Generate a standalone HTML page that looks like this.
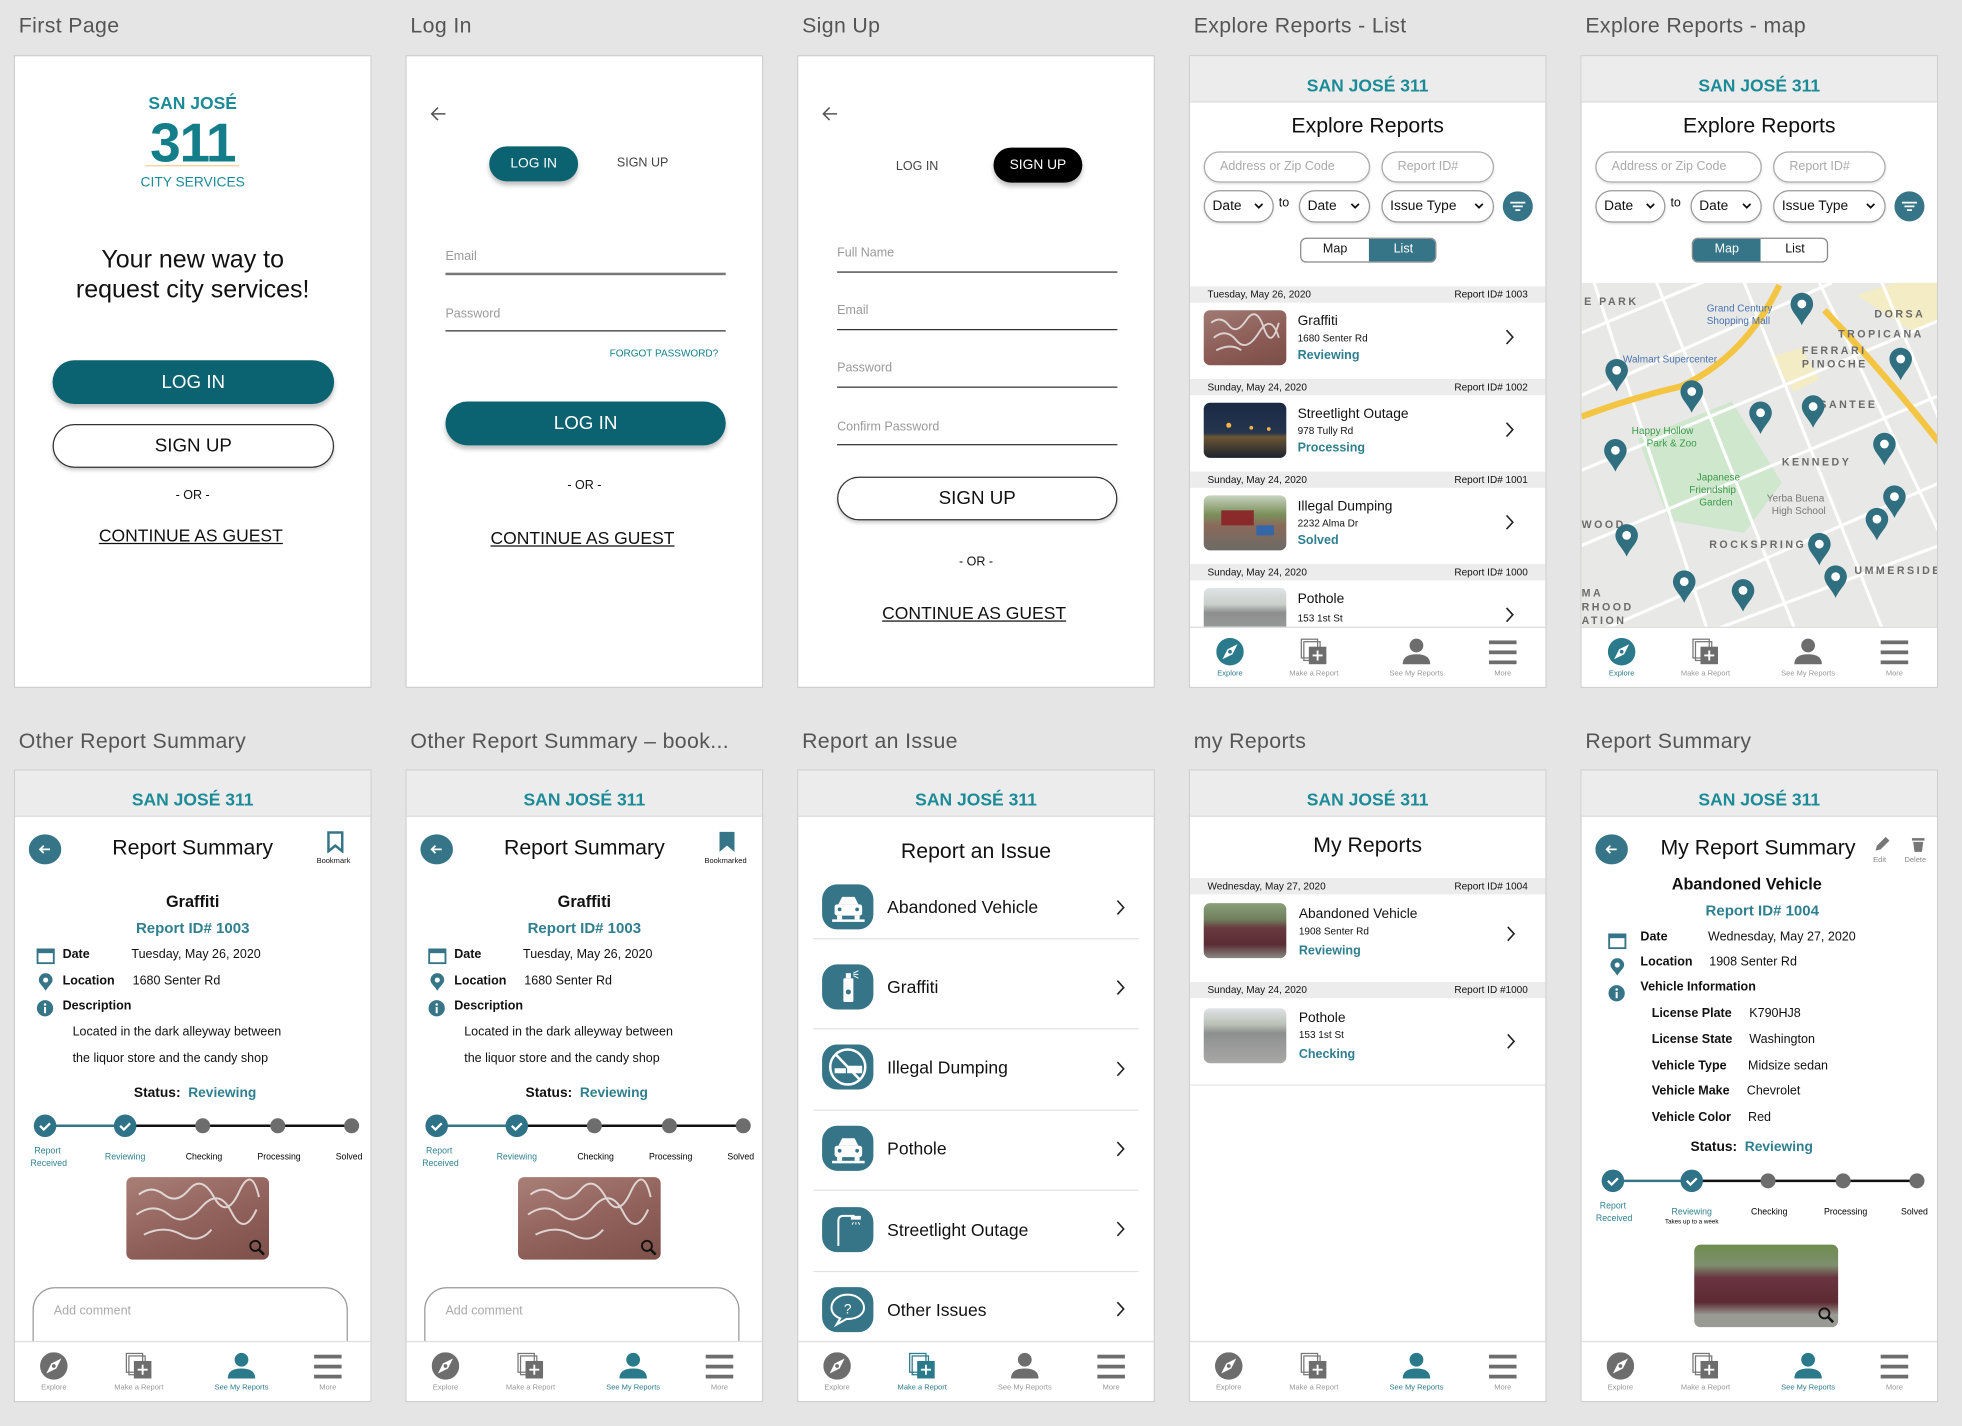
<!DOCTYPE html>
<html><head><meta charset="utf-8">
<style>
*{margin:0;padding:0;box-sizing:border-box}
html,body{width:1962px;height:1426px;overflow:hidden;background:#e5e5e5}
#w{position:absolute;left:0;top:0;width:1568px;height:1140px;transform:scale(1.25128,1.25088);transform-origin:0 0;font-family:"Liberation Sans",Arial,sans-serif;color:#111}
.lbl{position:absolute;font-size:17px;color:#555;white-space:nowrap;letter-spacing:.3px}
.p{position:absolute;width:286px;height:506px;background:#fff;border:1px solid #cfcfcf;overflow:hidden}
.a{position:absolute;white-space:nowrap;line-height:1}
.c{left:0;right:0;text-align:center}
.hd{position:absolute;left:0;top:0;width:100%;height:37px;background:#ececec;border-bottom:1px solid #dcdcdc}
.hd span{position:absolute;left:0;right:0;top:16px;text-align:center;font-weight:bold;font-size:14px;color:#1b8b97;line-height:1}
.btn{position:absolute;border-radius:18px;text-align:center;font-size:15px}
.fill{background:#0b6270;color:#fff;box-shadow:0 3px 4px rgba(0,0,0,.25)}
.out{background:#fff;border:1px solid #333;box-shadow:0 2px 3px rgba(0,0,0,.2)}
.ph{position:absolute;font-size:10px;color:#9a9a9a;line-height:1}
.ln{position:absolute;height:1px;background:#333}
.pill{position:absolute;height:25px;border:1px solid #aaa;border-radius:13px;font-size:10px;color:#aaa;line-height:23px;padding-left:12px;box-shadow:0 1px 2px rgba(0,0,0,.15)}
.dd{position:absolute;height:26px;border:1px solid #999;border-radius:13px;font-size:11px;color:#111;line-height:24px;padding-left:6px;box-shadow:0 1px 2px rgba(0,0,0,.15)}
.dd svg{position:absolute;right:7px;top:9px}
.band{position:absolute;left:0;width:100%;height:13px;background:#ececec;font-size:8px;line-height:13px}
.band b{font-weight:normal;position:absolute;left:14px}
.band i{font-style:normal;position:absolute;right:14px}
.img{position:absolute;border-radius:5px;overflow:hidden}
.nav{position:absolute;left:0;top:456px;width:100%;height:50px;background:#fff;border-top:1px solid #ddd}
.ni{position:absolute;top:8px;width:60px;text-align:center;font-size:6px;color:#999}
.ni svg{display:block;margin:0 auto 4px}
.act{color:#2a7a8c}
.rt{position:absolute;left:71px;font-size:14px;line-height:1}
.ic{position:absolute;left:19px;width:41px;height:36px;border-radius:12px;background:#367588}
.dv{position:absolute;left:12px;right:12px;height:1px;background:#e2e2e2}
.b10{font-size:10px}
</style></head><body><div id="w">

<!-- labels -->
<div class="lbl" style="left:15px;top:11px">First Page</div>
<div class="lbl" style="left:328px;top:11px">Log In</div>
<div class="lbl" style="left:641px;top:11px">Sign Up</div>
<div class="lbl" style="left:954px;top:11px">Explore Reports - List</div>
<div class="lbl" style="left:1267px;top:11px">Explore Reports - map</div>
<div class="lbl" style="left:15px;top:583px">Other Report Summary</div>
<div class="lbl" style="left:328px;top:583px">Other Report Summary – book...</div>
<div class="lbl" style="left:641px;top:583px">Report an Issue</div>
<div class="lbl" style="left:954px;top:583px">my Reports</div>
<div class="lbl" style="left:1267px;top:583px">Report Summary</div>

<!-- P1 First page -->
<div class="p" style="left:11px;top:44px">
 <div class="a c" style="top:30px;font-size:14px;font-weight:bold;color:#1b8b97">SAN JOSÉ</div>
 <div class="a c" style="top:48px;font-size:44px;font-weight:bold;color:#137e8a;letter-spacing:-1px">311</div>
 <div class="a" style="left:104px;top:87px;width:75px;height:1px;background:#f5cf8f"></div>
 <div class="a c" style="top:96px;font-size:11px;color:#1b8b97">CITY SERVICES</div>
 <div class="a c" style="top:153px;font-size:20px">Your new way to</div>
 <div class="a c" style="top:177px;font-size:20px">request city services!</div>
 <div class="btn fill" style="left:30px;top:243px;width:225px;height:35px;line-height:35px">LOG IN</div>
 <div class="btn out" style="left:30px;top:294px;width:225px;height:35px;line-height:33px">SIGN UP</div>
 <div class="a c" style="top:347px;font-size:10px">- OR -</div>
 <div class="a" style="left:67px;top:376px;font-size:14px;text-decoration:underline">CONTINUE AS GUEST</div>
</div>

<!-- P2 Log in -->
<div class="p" style="left:324px;top:44px">
 <svg class="a" style="left:18px;top:40px" width="14" height="12"><path d="M13 6H2M7 1L2 6l5 5" stroke="#555" fill="none" stroke-width="1.2"/></svg>
 <div class="btn fill" style="left:66px;top:72px;width:71px;height:28px;line-height:28px;font-size:11px;border-radius:14px">LOG IN</div>
 <div class="a" style="left:168px;top:81px;font-size:10px;color:#444">SIGN UP</div>
 <div class="ph" style="left:31px;top:156px">Email</div>
 <div class="ln" style="left:31px;top:173px;width:224px;height:2px;background:#777"></div>
 <div class="ph" style="left:31px;top:202px">Password</div>
 <div class="ln" style="left:31px;top:219px;width:224px"></div>
 <div class="a" style="right:35px;top:234px;font-size:8px;color:#137e8a">FORGOT PASSWORD?</div>
 <div class="btn fill" style="left:31px;top:276px;width:224px;height:35px;line-height:35px">LOG IN</div>
 <div class="a c" style="top:339px;font-size:10px">- OR -</div>
 <div class="a" style="left:67px;top:378px;font-size:14px;text-decoration:underline">CONTINUE AS GUEST</div>
</div>

<!-- P3 Sign up -->
<div class="p" style="left:637px;top:44px">
 <svg class="a" style="left:18px;top:40px" width="14" height="12"><path d="M13 6H2M7 1L2 6l5 5" stroke="#555" fill="none" stroke-width="1.2"/></svg>
 <div class="a" style="left:78px;top:84px;font-size:10px;color:#444">LOG IN</div>
 <div class="btn" style="left:156px;top:73px;width:71px;height:28px;line-height:28px;font-size:11px;border-radius:14px;background:#000;color:#fff;box-shadow:0 3px 4px rgba(0,0,0,.25)">SIGN UP</div>
 <div class="ph" style="left:31px;top:153px">Full Name</div><div class="ln" style="left:31px;top:172px;width:224px"></div>
 <div class="ph" style="left:31px;top:199px">Email</div><div class="ln" style="left:31px;top:218px;width:224px"></div>
 <div class="ph" style="left:31px;top:245px">Password</div><div class="ln" style="left:31px;top:264px;width:224px"></div>
 <div class="ph" style="left:31px;top:292px">Confirm Password</div><div class="ln" style="left:31px;top:310px;width:224px"></div>
 <div class="btn out" style="left:31px;top:336px;width:224px;height:35px;line-height:33px">SIGN UP</div>
 <div class="a c" style="top:400px;font-size:10px">- OR -</div>
 <div class="a" style="left:67px;top:438px;font-size:14px;text-decoration:underline">CONTINUE AS GUEST</div>
</div>

<!-- P4 Explore list -->
<div class="p" style="left:950px;top:44px">
 <div class="hd"><span>SAN JOSÉ 311</span></div>
 <div class="a c" style="top:47px;font-size:17px">Explore Reports</div>
 <div class="pill" style="left:11px;top:76px;width:133px">Address or Zip Code</div>
 <div class="pill" style="left:153px;top:76px;width:90px">Report ID#</div>
 <div class="dd" style="left:11px;top:107px;width:56px">Date<svg width="8" height="6"><path d="M1 1l3 3 3-3" stroke="#111" fill="none" stroke-width="1.4"/></svg></div>
 <div class="a" style="left:71px;top:113px;font-size:10px">to</div>
 <div class="dd" style="left:87px;top:107px;width:57px">Date<svg width="8" height="6"><path d="M1 1l3 3 3-3" stroke="#111" fill="none" stroke-width="1.4"/></svg></div>
 <div class="dd" style="left:153px;top:107px;width:90px">Issue Type<svg width="8" height="6"><path d="M1 1l3 3 3-3" stroke="#111" fill="none" stroke-width="1.4"/></svg></div>
 <svg class="a" style="left:249px;top:107px" width="26" height="26"><circle cx="13" cy="13" r="12" fill="#367588"/><path d="M7 10h12M9 13h8M11 16h4" stroke="#fff" stroke-width="1.4"/></svg>
 <div class="a" style="left:88px;top:145px;width:109px;height:20px;border:1px solid #888;border-radius:5px;overflow:hidden;font-size:10px;line-height:18px">
  <div style="position:absolute;left:0;width:54px;text-align:center">Map</div>
  <div style="position:absolute;left:54px;width:55px;height:20px;text-align:center;background:#367588;color:#fff">List</div></div>
 <div class="band" style="top:184px"><b>Tuesday, May 26, 2020</b><i>Report ID# 1003</i></div>
 <div class="img" style="left:11px;top:203px;width:66px;height:44px;background:linear-gradient(160deg,#a07a74,#8b5a54 60%,#7a4e48)"><svg width="66" height="44"><path d="M6 10q8-6 14 2t14-4 14 6 12-4M8 22q10-8 18 2t18-6 16 4M10 32q12-6 20 0" stroke="#eee" fill="none" stroke-width="1.5" opacity=".8"/></svg></div>
 <div class="a" style="left:86px;top:207px;font-size:11px">Graffiti</div>
 <div class="a" style="left:86px;top:222px;font-size:8px">1680 Senter Rd</div>
 <div class="a" style="left:86px;top:235px;font-size:10px;font-weight:bold;color:#2f7f8f">Reviewing</div>
 <svg class="a" style="left:252px;top:218px" width="8" height="13"><path d="M1 1l5 5.5L1 12" stroke="#222" fill="none" stroke-width="1.3"/></svg>
 <div class="band" style="top:258px"><b>Sunday, May 24, 2020</b><i>Report ID# 1002</i></div>
 <div class="img" style="left:11px;top:277px;width:66px;height:44px;background:linear-gradient(180deg,#1a2a44,#26354e 55%,#6b5533 62%,#1c2430)"><svg width="66" height="44"><circle cx="20" cy="18" r="2" fill="#f5b34a"/><circle cx="38" cy="20" r="1.5" fill="#f5b34a"/><circle cx="52" cy="21" r="1.5" fill="#f5b34a"/></svg></div>
 <div class="a" style="left:86px;top:281px;font-size:11px">Streetlight Outage</div>
 <div class="a" style="left:86px;top:296px;font-size:8px">978 Tully Rd</div>
 <div class="a" style="left:86px;top:309px;font-size:10px;font-weight:bold;color:#2f7f8f">Processing</div>
 <svg class="a" style="left:252px;top:292px" width="8" height="13"><path d="M1 1l5 5.5L1 12" stroke="#222" fill="none" stroke-width="1.3"/></svg>
 <div class="band" style="top:332px"><b>Sunday, May 24, 2020</b><i>Report ID# 1001</i></div>
 <div class="img" style="left:11px;top:351px;width:66px;height:44px;background:linear-gradient(180deg,#c8d4c0,#7a8f5a 35%,#8a6a5a 55%,#6c6a66)"><svg width="66" height="44"><rect x="14" y="12" width="26" height="12" fill="#8a2a2a"/><rect x="42" y="24" width="14" height="8" fill="#3466a8"/></svg></div>
 <div class="a" style="left:86px;top:355px;font-size:11px">Illegal Dumping</div>
 <div class="a" style="left:86px;top:370px;font-size:8px">2232 Alma Dr</div>
 <div class="a" style="left:86px;top:383px;font-size:10px;font-weight:bold;color:#2f7f8f">Solved</div>
 <svg class="a" style="left:252px;top:366px" width="8" height="13"><path d="M1 1l5 5.5L1 12" stroke="#222" fill="none" stroke-width="1.3"/></svg>
 <div class="band" style="top:406px"><b>Sunday, May 24, 2020</b><i>Report ID# 1000</i></div>
 <div class="img" style="left:11px;top:425px;width:66px;height:44px;background:linear-gradient(180deg,#dfe3e6,#c9cfc9 30%,#8d8f8f 45%,#a3a3a3)"></div>
 <div class="a" style="left:86px;top:429px;font-size:11px">Pothole</div>
 <div class="a" style="left:86px;top:446px;font-size:8px">153 1st St</div>
 <svg class="a" style="left:252px;top:440px" width="8" height="13"><path d="M1 1l5 5.5L1 12" stroke="#222" fill="none" stroke-width="1.3"/></svg>
 <div class="nav">
  <div class="ni act" style="left:2px"><svg width="22" height="22"><circle cx="11" cy="11" r="11" fill="#2a7a8c"/><path d="M17 5l-4 8-8 4 4-8z" fill="#fff"/><circle cx="11" cy="11" r="1.5" fill="#2a7a8c"/></svg>Explore</div>
  <div class="ni" style="left:69px"><svg width="22" height="22"><rect x="1" y="1" width="13" height="15" fill="none" stroke="#777"/><rect x="3" y="3" width="13" height="15" fill="none" stroke="#777"/><rect x="7" y="7" width="14" height="14" fill="#6d6d6d"/><path d="M14 10v8M10 14h8" stroke="#fff" stroke-width="1.5"/></svg>Make a Report</div>
  <div class="ni" style="left:151px"><svg width="24" height="22"><circle cx="12" cy="6" r="5.5" fill="#6d6d6d"/><path d="M1 21q0-8 11-8t11 8z" fill="#6d6d6d"/></svg>See My Reports</div>
  <div class="ni" style="left:220px"><svg width="24" height="22"><rect x="1" y="2" width="22" height="3" fill="#6d6d6d"/><rect x="1" y="10" width="22" height="3" fill="#6d6d6d"/><rect x="1" y="18" width="22" height="3" fill="#6d6d6d"/></svg>More</div>
 </div>
</div>

<!-- P5 Explore map -->
<div class="p" style="left:1263px;top:44px">
 <div class="hd"><span>SAN JOSÉ 311</span></div>
 <div class="a c" style="top:47px;font-size:17px">Explore Reports</div>
 <div class="pill" style="left:11px;top:76px;width:133px">Address or Zip Code</div>
 <div class="pill" style="left:153px;top:76px;width:90px">Report ID#</div>
 <div class="dd" style="left:11px;top:107px;width:56px">Date<svg width="8" height="6"><path d="M1 1l3 3 3-3" stroke="#111" fill="none" stroke-width="1.4"/></svg></div>
 <div class="a" style="left:71px;top:113px;font-size:10px">to</div>
 <div class="dd" style="left:87px;top:107px;width:57px">Date<svg width="8" height="6"><path d="M1 1l3 3 3-3" stroke="#111" fill="none" stroke-width="1.4"/></svg></div>
 <div class="dd" style="left:153px;top:107px;width:90px">Issue Type<svg width="8" height="6"><path d="M1 1l3 3 3-3" stroke="#111" fill="none" stroke-width="1.4"/></svg></div>
 <svg class="a" style="left:249px;top:107px" width="26" height="26"><circle cx="13" cy="13" r="12" fill="#367588"/><path d="M7 10h12M9 13h8M11 16h4" stroke="#fff" stroke-width="1.4"/></svg>
 <div class="a" style="left:88px;top:145px;width:109px;height:20px;border:1px solid #888;border-radius:5px;overflow:hidden;font-size:10px;line-height:18px">
  <div style="position:absolute;left:0;width:54px;height:20px;text-align:center;background:#367588;color:#fff">Map</div>
  <div style="position:absolute;left:54px;width:55px;text-align:center">List</div></div>
 <svg class="a" style="left:0;top:181px" width="286" height="276" font-family="Liberation Sans,sans-serif">
  <rect width="286" height="276" fill="#e8e8e6"/>
  <path d="M45 125L120 95 160 160 130 200 70 190z" fill="#cfe7cc"/>
  <path d="M220 10l30 -10h36v30l-20 10zM150 60l25 -8 15 25-20 10z" fill="#f3ecc4"/>
  <g stroke="#fff" stroke-width="2.5" fill="none">
   <path d="M0 40L120 -10M0 90L200 0M0 150L286 30M0 210L286 90M20 276L286 160M110 276L286 210"/>
   <path d="M10 0L100 276M60 0L170 276M130 0L240 276M190 0L286 200M240 0L286 110"/>
  </g>
  <path d="M0 107Q40 92 79 83Q130 60 158 2" stroke="#f4c542" stroke-width="5" fill="none"/>
  <path d="M194 22Q240 70 286 128" stroke="#f4c542" stroke-width="5" fill="none"/>
  <g font-size="8" fill="#4a73b0"><text x="100" y="23">Grand Century</text><text x="100" y="33">Shopping Mall</text><text x="33" y="64">Walmart Supercenter</text></g>
  <g font-size="8" fill="#3b9a4a"><text x="40" y="121">Happy Hollow</text><text x="52" y="131">Park &amp; Zoo</text><text x="92" y="158">Japanese</text><text x="86" y="168">Friendship</text><text x="94" y="178">Garden</text></g>
  <g font-size="8" fill="#777"><text x="148" y="175">Yerba Buena</text><text x="152" y="185">High School</text></g>
  <g font-size="8.5" fill="#6b6b6b" font-weight="bold" letter-spacing="2"><text x="2" y="18">E PARK</text><text x="234" y="28">DORSA</text><text x="205" y="44">TROPICANA</text><text x="176" y="57">FERRARI</text><text x="176" y="68">PINOCHE</text><text x="190" y="100">SANTEE</text><text x="160" y="146">KENNEDY</text><text x="0" y="196">WOOD</text><text x="102" y="212">ROCKSPRING</text><text x="218" y="233">UMMERSIDE</text><text x="0" y="251">MA</text><text x="0" y="262">RHOOD</text><text x="0" y="273">ATION</text></g>
  <g fill="#2f6f80">
   <g transform="translate(176,18)"><path d="M0 16C-3 9-9 5-9-1A9 9 0 1 1 9-1C9 5 3 9 0 16Z"/><circle cy="-1" r="3.5" fill="#fff"/></g>
   <g transform="translate(28,71)"><path d="M0 16C-3 9-9 5-9-1A9 9 0 1 1 9-1C9 5 3 9 0 16Z"/><circle cy="-1" r="3.5" fill="#fff"/></g>
   <g transform="translate(88,88)"><path d="M0 16C-3 9-9 5-9-1A9 9 0 1 1 9-1C9 5 3 9 0 16Z"/><circle cy="-1" r="3.5" fill="#fff"/></g>
   <g transform="translate(143,105)"><path d="M0 16C-3 9-9 5-9-1A9 9 0 1 1 9-1C9 5 3 9 0 16Z"/><circle cy="-1" r="3.5" fill="#fff"/></g>
   <g transform="translate(185,100)"><path d="M0 16C-3 9-9 5-9-1A9 9 0 1 1 9-1C9 5 3 9 0 16Z"/><circle cy="-1" r="3.5" fill="#fff"/></g>
   <g transform="translate(255,62)"><path d="M0 16C-3 9-9 5-9-1A9 9 0 1 1 9-1C9 5 3 9 0 16Z"/><circle cy="-1" r="3.5" fill="#fff"/></g>
   <g transform="translate(27,135)"><path d="M0 16C-3 9-9 5-9-1A9 9 0 1 1 9-1C9 5 3 9 0 16Z"/><circle cy="-1" r="3.5" fill="#fff"/></g>
   <g transform="translate(242,130)"><path d="M0 16C-3 9-9 5-9-1A9 9 0 1 1 9-1C9 5 3 9 0 16Z"/><circle cy="-1" r="3.5" fill="#fff"/></g>
   <g transform="translate(250,172)"><path d="M0 16C-3 9-9 5-9-1A9 9 0 1 1 9-1C9 5 3 9 0 16Z"/><circle cy="-1" r="3.5" fill="#fff"/></g>
   <g transform="translate(236,190)"><path d="M0 16C-3 9-9 5-9-1A9 9 0 1 1 9-1C9 5 3 9 0 16Z"/><circle cy="-1" r="3.5" fill="#fff"/></g>
   <g transform="translate(36,203)"><path d="M0 16C-3 9-9 5-9-1A9 9 0 1 1 9-1C9 5 3 9 0 16Z"/><circle cy="-1" r="3.5" fill="#fff"/></g>
   <g transform="translate(190,210)"><path d="M0 16C-3 9-9 5-9-1A9 9 0 1 1 9-1C9 5 3 9 0 16Z"/><circle cy="-1" r="3.5" fill="#fff"/></g>
   <g transform="translate(203,236)"><path d="M0 16C-3 9-9 5-9-1A9 9 0 1 1 9-1C9 5 3 9 0 16Z"/><circle cy="-1" r="3.5" fill="#fff"/></g>
   <g transform="translate(82,240)"><path d="M0 16C-3 9-9 5-9-1A9 9 0 1 1 9-1C9 5 3 9 0 16Z"/><circle cy="-1" r="3.5" fill="#fff"/></g>
   <g transform="translate(129,247)"><path d="M0 16C-3 9-9 5-9-1A9 9 0 1 1 9-1C9 5 3 9 0 16Z"/><circle cy="-1" r="3.5" fill="#fff"/></g>
  </g>
 </svg>
 <div class="nav">
  <div class="ni act" style="left:2px"><svg width="22" height="22"><circle cx="11" cy="11" r="11" fill="#2a7a8c"/><path d="M17 5l-4 8-8 4 4-8z" fill="#fff"/><circle cx="11" cy="11" r="1.5" fill="#2a7a8c"/></svg>Explore</div>
  <div class="ni" style="left:69px"><svg width="22" height="22"><rect x="1" y="1" width="13" height="15" fill="none" stroke="#777"/><rect x="3" y="3" width="13" height="15" fill="none" stroke="#777"/><rect x="7" y="7" width="14" height="14" fill="#6d6d6d"/><path d="M14 10v8M10 14h8" stroke="#fff" stroke-width="1.5"/></svg>Make a Report</div>
  <div class="ni" style="left:151px"><svg width="24" height="22"><circle cx="12" cy="6" r="5.5" fill="#6d6d6d"/><path d="M1 21q0-8 11-8t11 8z" fill="#6d6d6d"/></svg>See My Reports</div>
  <div class="ni" style="left:220px"><svg width="24" height="22"><rect x="1" y="2" width="22" height="3" fill="#6d6d6d"/><rect x="1" y="10" width="22" height="3" fill="#6d6d6d"/><rect x="1" y="18" width="22" height="3" fill="#6d6d6d"/></svg>More</div>
 </div>
</div>

<!-- P6 Other report summary -->
<div class="p" style="left:11px;top:615px">
 <div class="hd"><span>SAN JOSÉ 311</span></div>
 <svg class="a" style="left:11px;top:50px" width="26" height="26"><ellipse cx="13" cy="13" rx="13" ry="12" fill="#367588"/><path d="M17 13H9M12 10l-3 3 3 3" stroke="#fff" fill="none" stroke-width="1.4"/></svg>
 <div class="a c" style="top:53px;font-size:17px">Report Summary</div>
 <svg class="a" style="left:249px;top:48px" width="14" height="18"><path d="M1.5 1.5h11v15L7 12l-5.5 4.5z" fill="none" stroke="#367588" stroke-width="2"/></svg>
 <div class="a" style="left:241px;top:70px;font-size:6px">Bookmark</div>
 <div class="a c" style="top:98px;font-size:13px;font-weight:bold">Graffiti</div>
 <div class="a c" style="top:120px;font-size:12px;font-weight:bold;color:#2f7f8f">Report ID# 1003</div>
 <svg class="a" style="left:17px;top:141px" width="15" height="14"><rect x="1" y="2" width="13" height="11" fill="none" stroke="#367588" stroke-width="1.5"/><rect x="1" y="2" width="13" height="3" fill="#367588"/></svg>
 <svg class="a" style="left:18px;top:162px" width="13" height="15"><path d="M6.5 14C4 10 1 8 1 5.5a5.5 5.5 0 0 1 11 0C12 8 9 10 6.5 14z" fill="#367588"/><circle cx="6.5" cy="5.5" r="2" fill="#fff"/></svg>
 <svg class="a" style="left:17px;top:183px" width="14" height="14"><circle cx="7" cy="7" r="6.5" fill="#367588"/><rect x="6.2" y="6" width="1.6" height="5" fill="#fff"/><circle cx="7" cy="4" r="1" fill="#fff"/></svg>
 <div class="a b10" style="left:38px;top:143px;font-weight:bold">Date</div><div class="a b10" style="left:93px;top:143px">Tuesday, May 26, 2020</div>
 <div class="a b10" style="left:38px;top:164px;font-weight:bold">Location</div><div class="a b10" style="left:94px;top:164px">1680 Senter Rd</div>
 <div class="a b10" style="left:38px;top:184px;font-weight:bold">Description</div>
 <div class="a b10" style="left:46px;top:205px">Located in the dark alleyway between</div>
 <div class="a b10" style="left:46px;top:226px">the liquor store and the candy shop</div>
 <div class="a" style="left:95px;top:253px;font-size:11px;font-weight:bold">Status:&nbsp; <span style="color:#2f7f8f">Reviewing</span></div>
 <svg class="a" style="left:0;top:272px" width="286" height="50" font-family="Liberation Sans,sans-serif"><line x1="24" y1="12" x2="88" y2="12" stroke="#367588" stroke-width="2"/><line x1="88" y1="12" x2="269" y2="12" stroke="#111" stroke-width="2"/><circle cx="24" cy="12" r="9" fill="#2f7388"/><path d="M20 12l3 3 5-5" stroke="#fff" stroke-width="1.8" fill="none"/><circle cx="88" cy="12" r="9" fill="#2f7388"/><path d="M84 12l3 3 5-5" stroke="#fff" stroke-width="1.8" fill="none"/><circle cx="150" cy="12" r="6" fill="#6d6d6d"/><circle cx="210" cy="12" r="6" fill="#6d6d6d"/><circle cx="269" cy="12" r="6" fill="#6d6d6d"/><g font-size="7" text-anchor="middle"><text x="26" y="34" fill="#2f7f8f">Report</text><text x="27" y="44" fill="#2f7f8f">Received</text><text x="88" y="39" fill="#2f7f8f">Reviewing</text><text x="151" y="39">Checking</text><text x="211" y="39">Processing</text><text x="267" y="39">Solved</text></g></svg>
 <div class="img" style="left:89px;top:325px;width:114px;height:66px;background:linear-gradient(160deg,#a87f76,#90605a 55%,#7d5049)"><svg width="114" height="66"><path d="M10 14q10-8 20 0t20-4 20 6 20-4 16 4M8 30q14-10 26 0t26-6 24 4 20-2M14 46q16-8 30 0t24-4" stroke="#f0f0f0" fill="none" stroke-width="1.6" opacity=".8"/><circle cx="103" cy="55" r="4" fill="none" stroke="#111" stroke-width="1.5"/><path d="M106 58l4 4" stroke="#111" stroke-width="2"/></svg></div>
 <div class="a" style="left:14px;top:413px;width:252px;height:60px;border:1px solid #999;border-radius:18px 18px 0 0"></div>
 <div class="a b10" style="left:31px;top:428px;color:#aaa">Add comment</div>
 <div class="nav">
  <div class="ni" style="left:1px"><svg width="22" height="22"><circle cx="11" cy="11" r="11" fill="#6d6d6d"/><path d="M17 5l-4 8-8 4 4-8z" fill="#fff"/><circle cx="11" cy="11" r="1.5" fill="#6d6d6d"/></svg>Explore</div>
  <div class="ni" style="left:69px"><svg width="22" height="22"><rect x="1" y="1" width="13" height="15" fill="none" stroke="#777"/><rect x="3" y="3" width="13" height="15" fill="none" stroke="#777"/><rect x="7" y="7" width="14" height="14" fill="#6d6d6d"/><path d="M14 10v8M10 14h8" stroke="#fff" stroke-width="1.5"/></svg>Make a Report</div>
  <div class="ni act" style="left:151px"><svg width="24" height="22"><circle cx="12" cy="6" r="5.5" fill="#2a7a8c"/><path d="M1 21q0-8 11-8t11 8z" fill="#2a7a8c"/></svg>See My Reports</div>
  <div class="ni" style="left:220px"><svg width="24" height="22"><rect x="1" y="2" width="22" height="3" fill="#6d6d6d"/><rect x="1" y="10" width="22" height="3" fill="#6d6d6d"/><rect x="1" y="18" width="22" height="3" fill="#6d6d6d"/></svg>More</div>
 </div>
</div>

<!-- P7 bookmarked -->
<div class="p" style="left:324px;top:615px">
 <div class="hd"><span>SAN JOSÉ 311</span></div>
 <svg class="a" style="left:11px;top:50px" width="26" height="26"><ellipse cx="13" cy="13" rx="13" ry="12" fill="#367588"/><path d="M17 13H9M12 10l-3 3 3 3" stroke="#fff" fill="none" stroke-width="1.4"/></svg>
 <div class="a c" style="top:53px;font-size:17px">Report Summary</div>
 <svg class="a" style="left:249px;top:48px" width="14" height="18"><path d="M1 1h12v16L7 12l-6 5z" fill="#367588"/></svg>
 <div class="a" style="left:238px;top:70px;font-size:6px">Bookmarked</div>
 <div class="a c" style="top:98px;font-size:13px;font-weight:bold">Graffiti</div>
 <div class="a c" style="top:120px;font-size:12px;font-weight:bold;color:#2f7f8f">Report ID# 1003</div>
 <svg class="a" style="left:17px;top:141px" width="15" height="14"><rect x="1" y="2" width="13" height="11" fill="none" stroke="#367588" stroke-width="1.5"/><rect x="1" y="2" width="13" height="3" fill="#367588"/></svg>
 <svg class="a" style="left:18px;top:162px" width="13" height="15"><path d="M6.5 14C4 10 1 8 1 5.5a5.5 5.5 0 0 1 11 0C12 8 9 10 6.5 14z" fill="#367588"/><circle cx="6.5" cy="5.5" r="2" fill="#fff"/></svg>
 <svg class="a" style="left:17px;top:183px" width="14" height="14"><circle cx="7" cy="7" r="6.5" fill="#367588"/><rect x="6.2" y="6" width="1.6" height="5" fill="#fff"/><circle cx="7" cy="4" r="1" fill="#fff"/></svg>
 <div class="a b10" style="left:38px;top:143px;font-weight:bold">Date</div><div class="a b10" style="left:93px;top:143px">Tuesday, May 26, 2020</div>
 <div class="a b10" style="left:38px;top:164px;font-weight:bold">Location</div><div class="a b10" style="left:94px;top:164px">1680 Senter Rd</div>
 <div class="a b10" style="left:38px;top:184px;font-weight:bold">Description</div>
 <div class="a b10" style="left:46px;top:205px">Located in the dark alleyway between</div>
 <div class="a b10" style="left:46px;top:226px">the liquor store and the candy shop</div>
 <div class="a" style="left:95px;top:253px;font-size:11px;font-weight:bold">Status:&nbsp; <span style="color:#2f7f8f">Reviewing</span></div>
 <svg class="a" style="left:0;top:272px" width="286" height="50" font-family="Liberation Sans,sans-serif"><line x1="24" y1="12" x2="88" y2="12" stroke="#367588" stroke-width="2"/><line x1="88" y1="12" x2="269" y2="12" stroke="#111" stroke-width="2"/><circle cx="24" cy="12" r="9" fill="#2f7388"/><path d="M20 12l3 3 5-5" stroke="#fff" stroke-width="1.8" fill="none"/><circle cx="88" cy="12" r="9" fill="#2f7388"/><path d="M84 12l3 3 5-5" stroke="#fff" stroke-width="1.8" fill="none"/><circle cx="150" cy="12" r="6" fill="#6d6d6d"/><circle cx="210" cy="12" r="6" fill="#6d6d6d"/><circle cx="269" cy="12" r="6" fill="#6d6d6d"/><g font-size="7" text-anchor="middle"><text x="26" y="34" fill="#2f7f8f">Report</text><text x="27" y="44" fill="#2f7f8f">Received</text><text x="88" y="39" fill="#2f7f8f">Reviewing</text><text x="151" y="39">Checking</text><text x="211" y="39">Processing</text><text x="267" y="39">Solved</text></g></svg>
 <div class="img" style="left:89px;top:325px;width:114px;height:66px;background:linear-gradient(160deg,#a87f76,#90605a 55%,#7d5049)"><svg width="114" height="66"><path d="M10 14q10-8 20 0t20-4 20 6 20-4 16 4M8 30q14-10 26 0t26-6 24 4 20-2M14 46q16-8 30 0t24-4" stroke="#f0f0f0" fill="none" stroke-width="1.6" opacity=".8"/><circle cx="103" cy="55" r="4" fill="none" stroke="#111" stroke-width="1.5"/><path d="M106 58l4 4" stroke="#111" stroke-width="2"/></svg></div>
 <div class="a" style="left:14px;top:413px;width:252px;height:60px;border:1px solid #999;border-radius:18px 18px 0 0"></div>
 <div class="a b10" style="left:31px;top:428px;color:#aaa">Add comment</div>
 <div class="nav">
  <div class="ni" style="left:1px"><svg width="22" height="22"><circle cx="11" cy="11" r="11" fill="#6d6d6d"/><path d="M17 5l-4 8-8 4 4-8z" fill="#fff"/><circle cx="11" cy="11" r="1.5" fill="#6d6d6d"/></svg>Explore</div>
  <div class="ni" style="left:69px"><svg width="22" height="22"><rect x="1" y="1" width="13" height="15" fill="none" stroke="#777"/><rect x="3" y="3" width="13" height="15" fill="none" stroke="#777"/><rect x="7" y="7" width="14" height="14" fill="#6d6d6d"/><path d="M14 10v8M10 14h8" stroke="#fff" stroke-width="1.5"/></svg>Make a Report</div>
  <div class="ni act" style="left:151px"><svg width="24" height="22"><circle cx="12" cy="6" r="5.5" fill="#2a7a8c"/><path d="M1 21q0-8 11-8t11 8z" fill="#2a7a8c"/></svg>See My Reports</div>
  <div class="ni" style="left:220px"><svg width="24" height="22"><rect x="1" y="2" width="22" height="3" fill="#6d6d6d"/><rect x="1" y="10" width="22" height="3" fill="#6d6d6d"/><rect x="1" y="18" width="22" height="3" fill="#6d6d6d"/></svg>More</div>
 </div>
</div>

<!-- P8 Report an issue -->
<div class="p" style="left:637px;top:615px">
 <div class="hd"><span>SAN JOSÉ 311</span></div>
 <div class="a c" style="top:56px;font-size:17px">Report an Issue</div>
 <div class="ic" style="top:91px"><svg width="41" height="36"><path d="M13 16l3-6h10l3 6z" fill="#fff"/><rect x="10" y="16" width="22" height="9" rx="2" fill="#fff"/><rect x="12" y="25" width="4" height="3" fill="#fff"/><rect x="26" y="25" width="4" height="3" fill="#fff"/><rect x="8" y="28" width="26" height="2" fill="#fff"/><circle cx="14" cy="20" r="1.5" fill="#367588"/><circle cx="28" cy="20" r="1.5" fill="#367588"/></svg></div>
 <div class="rt" style="top:102px">Abandoned Vehicle</div>
 <div class="dv" style="top:134px"></div>
 <div class="ic" style="top:155px"><svg width="41" height="36"><rect x="17" y="11" width="8" height="19" rx="1" fill="#fff"/><rect x="19" y="7" width="4" height="4" fill="#fff"/><circle cx="21" cy="22" r="2" fill="#367588"/><path d="M25 7l4-2M25 8h4M25 9l4 2" stroke="#fff" stroke-width=".8"/></svg></div>
 <div class="rt" style="top:166px">Graffiti</div>
 <div class="dv" style="top:206px"></div>
 <div class="ic" style="top:219px"><svg width="41" height="36"><circle cx="20.5" cy="18" r="14" fill="none" stroke="#fff" stroke-width="2"/><path d="M11 8l19 20" stroke="#fff" stroke-width="2"/><rect x="20" y="17" width="12" height="6" fill="#fff"/><rect x="10" y="19" width="9" height="4" fill="#fff"/></svg></div>
 <div class="rt" style="top:230px">Illegal Dumping</div>
 <div class="dv" style="top:271px"></div>
 <div class="ic" style="top:284px"><svg width="41" height="36"><path d="M13 16l3-6h10l3 6z" fill="#fff"/><rect x="10" y="16" width="22" height="9" rx="2" fill="#fff"/><rect x="12" y="25" width="4" height="3" fill="#fff"/><rect x="26" y="25" width="4" height="3" fill="#fff"/><rect x="8" y="28" width="26" height="2" fill="#fff"/><circle cx="14" cy="20" r="1.5" fill="#367588"/><circle cx="28" cy="20" r="1.5" fill="#367588"/></svg></div>
 <div class="rt" style="top:295px">Pothole</div>
 <div class="dv" style="top:335px"></div>
 <div class="ic" style="top:349px"><svg width="41" height="36"><path d="M13 31V11q0-4 4-4h9" stroke="#fff" stroke-width="1.6" fill="none"/><path d="M23 7h8v3h-8z" fill="#fff"/><path d="M25 12l-1 2M27 12v2M29 12l1 2" stroke="#fff" stroke-width=".8"/></svg></div>
 <div class="rt" style="top:360px">Streetlight Outage</div>
 <div class="dv" style="top:400px"></div>
 <div class="ic" style="top:413px"><svg width="41" height="36"><path d="M20.5 6c-8 0-13 5-13 10.5 0 4 3 7 7 8.5l-3 5 8-4.5c9 0 14-4 14-9S28.5 6 20.5 6z" fill="none" stroke="#fff" stroke-width="1.6"/><text x="20.5" y="21" text-anchor="middle" font-size="11" fill="#fff" font-family="Liberation Sans">?</text></svg></div>
 <div class="rt" style="top:424px">Other Issues</div>
 <svg class="a" style="left:254px;top:103px" width="8" height="13"><path d="M1 1l5 5.5L1 12" stroke="#222" fill="none" stroke-width="1.3"/></svg>
 <svg class="a" style="left:254px;top:167px" width="8" height="13"><path d="M1 1l5 5.5L1 12" stroke="#222" fill="none" stroke-width="1.3"/></svg>
 <svg class="a" style="left:254px;top:232px" width="8" height="13"><path d="M1 1l5 5.5L1 12" stroke="#222" fill="none" stroke-width="1.3"/></svg>
 <svg class="a" style="left:254px;top:296px" width="8" height="13"><path d="M1 1l5 5.5L1 12" stroke="#222" fill="none" stroke-width="1.3"/></svg>
 <svg class="a" style="left:254px;top:360px" width="8" height="13"><path d="M1 1l5 5.5L1 12" stroke="#222" fill="none" stroke-width="1.3"/></svg>
 <svg class="a" style="left:254px;top:424px" width="8" height="13"><path d="M1 1l5 5.5L1 12" stroke="#222" fill="none" stroke-width="1.3"/></svg>
 <div class="nav">
  <div class="ni" style="left:1px"><svg width="22" height="22"><circle cx="11" cy="11" r="11" fill="#6d6d6d"/><path d="M17 5l-4 8-8 4 4-8z" fill="#fff"/><circle cx="11" cy="11" r="1.5" fill="#6d6d6d"/></svg>Explore</div>
  <div class="ni act" style="left:69px"><svg width="22" height="22"><rect x="1" y="1" width="13" height="15" fill="none" stroke="#2a7a8c"/><rect x="3" y="3" width="13" height="15" fill="none" stroke="#2a7a8c"/><rect x="7" y="7" width="14" height="14" fill="#2a7a8c"/><path d="M14 10v8M10 14h8" stroke="#fff" stroke-width="1.5"/></svg>Make a Report</div>
  <div class="ni" style="left:151px"><svg width="24" height="22"><circle cx="12" cy="6" r="5.5" fill="#6d6d6d"/><path d="M1 21q0-8 11-8t11 8z" fill="#6d6d6d"/></svg>See My Reports</div>
  <div class="ni" style="left:220px"><svg width="24" height="22"><rect x="1" y="2" width="22" height="3" fill="#6d6d6d"/><rect x="1" y="10" width="22" height="3" fill="#6d6d6d"/><rect x="1" y="18" width="22" height="3" fill="#6d6d6d"/></svg>More</div>
 </div>
</div>

<!-- P9 My reports -->
<div class="p" style="left:950px;top:615px">
 <div class="hd"><span>SAN JOSÉ 311</span></div>
 <div class="a c" style="top:51px;font-size:17px">My Reports</div>
 <div class="band" style="top:86px"><b>Wednesday, May 27, 2020</b><i>Report ID# 1004</i></div>
 <div class="img" style="left:11px;top:106px;width:66px;height:44px;background:linear-gradient(180deg,#8aa07a,#6f7f5e 30%,#6a3a40 45%,#5a2c33 75%,#8a8a84)"></div>
 <div class="a" style="left:87px;top:110px;font-size:11px">Abandoned Vehicle</div>
 <div class="a" style="left:87px;top:125px;font-size:8px">1908 Senter Rd</div>
 <div class="a" style="left:87px;top:140px;font-size:10px;font-weight:bold;color:#2f7f8f">Reviewing</div>
 <svg class="a" style="left:253px;top:124px" width="8" height="13"><path d="M1 1l5 5.5L1 12" stroke="#222" fill="none" stroke-width="1.3"/></svg>
 <div class="band" style="top:169px"><b>Sunday, May 24, 2020</b><i>Report ID #1000</i></div>
 <div class="img" style="left:11px;top:190px;width:66px;height:44px;background:linear-gradient(180deg,#dfe3e6,#b9c0b5 30%,#8d8f8f 45%,#a8a8a6)"></div>
 <div class="a" style="left:87px;top:193px;font-size:11px">Pothole</div>
 <div class="a" style="left:87px;top:208px;font-size:8px">153 1st St</div>
 <div class="a" style="left:87px;top:223px;font-size:10px;font-weight:bold;color:#2f7f8f">Checking</div>
 <svg class="a" style="left:253px;top:210px" width="8" height="13"><path d="M1 1l5 5.5L1 12" stroke="#222" fill="none" stroke-width="1.3"/></svg>
 <div class="a" style="left:0;top:251px;width:100%;height:1px;background:#e6e6e6"></div>
 <div class="nav">
  <div class="ni" style="left:1px"><svg width="22" height="22"><circle cx="11" cy="11" r="11" fill="#6d6d6d"/><path d="M17 5l-4 8-8 4 4-8z" fill="#fff"/><circle cx="11" cy="11" r="1.5" fill="#6d6d6d"/></svg>Explore</div>
  <div class="ni" style="left:69px"><svg width="22" height="22"><rect x="1" y="1" width="13" height="15" fill="none" stroke="#777"/><rect x="3" y="3" width="13" height="15" fill="none" stroke="#777"/><rect x="7" y="7" width="14" height="14" fill="#6d6d6d"/><path d="M14 10v8M10 14h8" stroke="#fff" stroke-width="1.5"/></svg>Make a Report</div>
  <div class="ni act" style="left:151px"><svg width="24" height="22"><circle cx="12" cy="6" r="5.5" fill="#2a7a8c"/><path d="M1 21q0-8 11-8t11 8z" fill="#2a7a8c"/></svg>See My Reports</div>
  <div class="ni" style="left:220px"><svg width="24" height="22"><rect x="1" y="2" width="22" height="3" fill="#6d6d6d"/><rect x="1" y="10" width="22" height="3" fill="#6d6d6d"/><rect x="1" y="18" width="22" height="3" fill="#6d6d6d"/></svg>More</div>
 </div>
</div>

<!-- P10 My report summary -->
<div class="p" style="left:1263px;top:615px">
 <div class="hd"><span>SAN JOSÉ 311</span></div>
 <svg class="a" style="left:11px;top:50px" width="26" height="26"><ellipse cx="13" cy="13" rx="13" ry="12" fill="#367588"/><path d="M17 13H9M12 10l-3 3 3 3" stroke="#fff" fill="none" stroke-width="1.4"/></svg>
 <div class="a" style="left:63px;top:53px;font-size:17px">My Report Summary</div>
 <svg class="a" style="left:233px;top:52px" width="14" height="14"><path d="M2 12l1-4 7-7 3 3-7 7z" fill="#777"/></svg>
 <div class="a" style="left:233px;top:69px;font-size:6px;color:#888">Edit</div>
 <svg class="a" style="left:263px;top:53px" width="12" height="13"><rect x="1" y="1" width="10" height="2" fill="#777"/><path d="M2 4h8l-1 8H3z" fill="#777"/></svg>
 <div class="a" style="left:258px;top:69px;font-size:6px;color:#888">Delete</div>
 <div class="a" style="left:72px;top:84px;font-size:13px;font-weight:bold">Abandoned Vehicle</div>
 <div class="a" style="left:99px;top:106px;font-size:12px;font-weight:bold;color:#2f7f8f">Report ID# 1004</div>
 <svg class="a" style="left:21px;top:129px" width="15" height="14"><rect x="1" y="2" width="13" height="11" fill="none" stroke="#367588" stroke-width="1.5"/><rect x="1" y="2" width="13" height="3" fill="#367588"/></svg>
 <svg class="a" style="left:22px;top:150px" width="13" height="15"><path d="M6.5 14C4 10 1 8 1 5.5a5.5 5.5 0 0 1 11 0C12 8 9 10 6.5 14z" fill="#367588"/><circle cx="6.5" cy="5.5" r="2" fill="#fff"/></svg>
 <svg class="a" style="left:21px;top:171px" width="14" height="14"><circle cx="7" cy="7" r="6.5" fill="#367588"/><rect x="6.2" y="6" width="1.6" height="5" fill="#fff"/><circle cx="7" cy="4" r="1" fill="#fff"/></svg>
 <div class="a b10" style="left:47px;top:129px;font-weight:bold">Date</div><div class="a b10" style="left:101px;top:129px">Wednesday, May 27, 2020</div>
 <div class="a b10" style="left:47px;top:149px;font-weight:bold">Location</div><div class="a b10" style="left:102px;top:149px">1908 Senter Rd</div>
 <div class="a b10" style="left:47px;top:169px;font-weight:bold">Vehicle Information</div>
 <div class="a b10" style="left:56px;top:190px;font-weight:bold">License Plate</div><div class="a b10" style="left:134px;top:190px">K790HJ8</div>
 <div class="a b10" style="left:56px;top:211px;font-weight:bold">License State</div><div class="a b10" style="left:134px;top:211px">Washington</div>
 <div class="a b10" style="left:56px;top:232px;font-weight:bold">Vehicle Type</div><div class="a b10" style="left:133px;top:232px">Midsize sedan</div>
 <div class="a b10" style="left:56px;top:252px;font-weight:bold">Vehicle Make</div><div class="a b10" style="left:132px;top:252px">Chevrolet</div>
 <div class="a b10" style="left:56px;top:273px;font-weight:bold">Vehicle Color</div><div class="a b10" style="left:133px;top:273px">Red</div>
 <div class="a" style="left:87px;top:296px;font-size:11px;font-weight:bold">Status:&nbsp; <span style="color:#2f7f8f">Reviewing</span></div>
 <svg class="a" style="left:0;top:316px" width="286" height="50" font-family="Liberation Sans,sans-serif"><line x1="25" y1="12" x2="88" y2="12" stroke="#367588" stroke-width="2"/><line x1="88" y1="12" x2="268" y2="12" stroke="#111" stroke-width="2"/><circle cx="25" cy="12" r="9" fill="#2f7388"/><path d="M21 12l3 3 5-5" stroke="#fff" stroke-width="1.8" fill="none"/><circle cx="88" cy="12" r="9" fill="#2f7388"/><path d="M84 12l3 3 5-5" stroke="#fff" stroke-width="1.8" fill="none"/><circle cx="149" cy="12" r="6" fill="#6d6d6d"/><circle cx="209" cy="12" r="6" fill="#6d6d6d"/><circle cx="268" cy="12" r="6" fill="#6d6d6d"/><g font-size="7" text-anchor="middle"><text x="25" y="34" fill="#2f7f8f">Report</text><text x="26" y="44" fill="#2f7f8f">Received</text><text x="88" y="39" fill="#2f7f8f">Reviewing</text><text x="88" y="46" font-size="5">Takes up to a week</text><text x="150" y="39">Checking</text><text x="211" y="39">Processing</text><text x="266" y="39">Solved</text></g></svg>
 <div class="img" style="left:90px;top:379px;width:115px;height:66px;background:linear-gradient(180deg,#6f8d4e,#7d8f6e 25%,#6a3440 40%,#5c2a33 70%,#9a9a94 85%)"><svg width="115" height="66"><circle cx="104" cy="55" r="4" fill="none" stroke="#111" stroke-width="1.5"/><path d="M107 58l4 4" stroke="#111" stroke-width="2"/></svg></div>
 <div class="nav">
  <div class="ni" style="left:1px"><svg width="22" height="22"><circle cx="11" cy="11" r="11" fill="#6d6d6d"/><path d="M17 5l-4 8-8 4 4-8z" fill="#fff"/><circle cx="11" cy="11" r="1.5" fill="#6d6d6d"/></svg>Explore</div>
  <div class="ni" style="left:69px"><svg width="22" height="22"><rect x="1" y="1" width="13" height="15" fill="none" stroke="#777"/><rect x="3" y="3" width="13" height="15" fill="none" stroke="#777"/><rect x="7" y="7" width="14" height="14" fill="#6d6d6d"/><path d="M14 10v8M10 14h8" stroke="#fff" stroke-width="1.5"/></svg>Make a Report</div>
  <div class="ni act" style="left:151px"><svg width="24" height="22"><circle cx="12" cy="6" r="5.5" fill="#2a7a8c"/><path d="M1 21q0-8 11-8t11 8z" fill="#2a7a8c"/></svg>See My Reports</div>
  <div class="ni" style="left:220px"><svg width="24" height="22"><rect x="1" y="2" width="22" height="3" fill="#6d6d6d"/><rect x="1" y="10" width="22" height="3" fill="#6d6d6d"/><rect x="1" y="18" width="22" height="3" fill="#6d6d6d"/></svg>More</div>
 </div>
</div>

</div></body></html>
